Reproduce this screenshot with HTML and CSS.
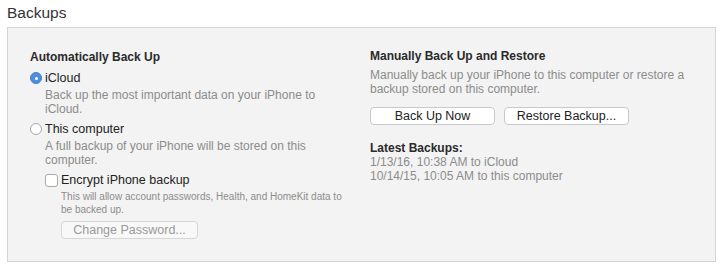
FILE: index.html
```html
<!DOCTYPE html>
<html lang="en">
<head>
  <meta charset="UTF-8" />
  <title>Backups</title>
  <link rel="stylesheet" href="styles.css">
</head>
<body>
  <h1 class="title">Backups</h1>
  <div class="panel">
    <div class="col left">
      <h3>Automatically Back Up</h3>

      <div class="option first">
        <span class="radio on"></span>
        <span class="label">iCloud</span>
      </div>
      <p class="desc">Back up the most important data on your iPhone to<br>iCloud.</p>

      <div class="option">
        <span class="radio"></span>
        <span class="label">This computer</span>
      </div>
      <p class="desc">A full backup of your iPhone will be stored on this<br>computer.</p>

      <div class="sub">
        <div class="option">
          <span class="check"></span>
          <span class="label">Encrypt iPhone backup</span>
        </div>
        <p class="note">This will allow account passwords, Health, and HomeKit data to<br>be backed up.</p>
        <button class="btn disabled">Change Password...</button>
      </div>
    </div>

    <div class="col right">
      <h3>Manually Back Up and Restore</h3>
      <p class="desc flush">Manually back up your iPhone to this computer or restore a<br>backup stored on this computer.</p>
      <div class="buttons">
        <button class="btn">Back Up Now</button>
        <button class="btn">Restore Backup...</button>
      </div>
      <h3 class="latest">Latest Backups:</h3>
      <p class="desc flush">1/13/16, 10:38 AM to iCloud<br>10/14/15, 10:05 AM to this computer</p>
    </div>
  </div>
</body>
</html>
```

FILE: styles.css
```css
body {
  margin: 0;
  background: #ffffff;
  font-family: "Liberation Sans", Arial, sans-serif;
  color: #222;
  width: 720px;
  height: 268px;
  overflow: hidden;
}
.title {
  margin: 0;
  padding: 3px 0 0 7px;
  font-size: 15.5px;
  font-weight: normal;
  color: #333;
  line-height: 20px;
  height: 24px;
}
.panel {
  margin-left: 7px;
  width: 709px;
  height: 235px;
  background: #f3f3f3;
  border: 1px solid #d4d4d4;
  display: flex;
  box-sizing: border-box;
}
.col {
  padding-top: 22px;
}
.left {
  padding-left: 22px;
  width: 340px;
}
.right {
  flex: 1;
  padding-top: 21px;
}
h3 {
  margin: 0 0 5px;
  font-size: 12px;
  font-weight: bold;
  color: #2a2a2a;
  line-height: 14px;
}
.option {
  display: flex;
  align-items: center;
  height: 14px;
  margin-bottom: 3px;
}
.option.first {
  margin-top: 7px;
}
.label {
  font-size: 12.5px;
  color: #222;
  margin-left: 3px;
}
.radio {
  width: 12px;
  height: 12px;
  border-radius: 50%;
  border: 1px solid #a8a8a8;
  background: #fff;
  box-sizing: border-box;
  position: relative;
}
.radio.on {
  background: #4d8ee0;
  border-color: #3f7fd2;
}
.radio.on::after {
  content: "";
  position: absolute;
  left: 3.5px;
  top: 3.5px;
  width: 3px;
  height: 3px;
  border-radius: 50%;
  background: #fff;
}
.check {
  width: 13px;
  height: 13px;
  border: 1px solid #a8a8a8;
  border-radius: 3px;
  background: #fff;
  box-sizing: border-box;
}
.desc {
  margin: 0 0 6px 15px;
  font-size: 12px;
  line-height: 14px;
  color: #8c8c8c;
}
.desc.flush {
  margin-left: 0;
}
.sub {
  padding-left: 15px;
}
.sub .label {
  margin-left: 3px;
}
.note {
  margin: 2px 0 4px 16px;
  font-size: 10px;
  line-height: 13px;
  color: #8c8c8c;
}
.btn {
  font-family: "Liberation Sans", Arial, sans-serif;
  font-size: 12.5px;
  color: #222;
  background: #fff;
  border: 1px solid #c9c9c9;
  border-radius: 4px;
  height: 18px;
  padding: 0;
  line-height: 16px;
  width: 125px;
}
.btn.disabled {
  margin-left: 16px;
  width: 137px;
  color: #9a9a9a;
  background: #f8f8f8;
  border-color: #d6d6d6;
}
.buttons {
  display: flex;
  gap: 9px;
  margin-top: 11px;
}
.latest {
  margin: 16px 0 0;
}
```
